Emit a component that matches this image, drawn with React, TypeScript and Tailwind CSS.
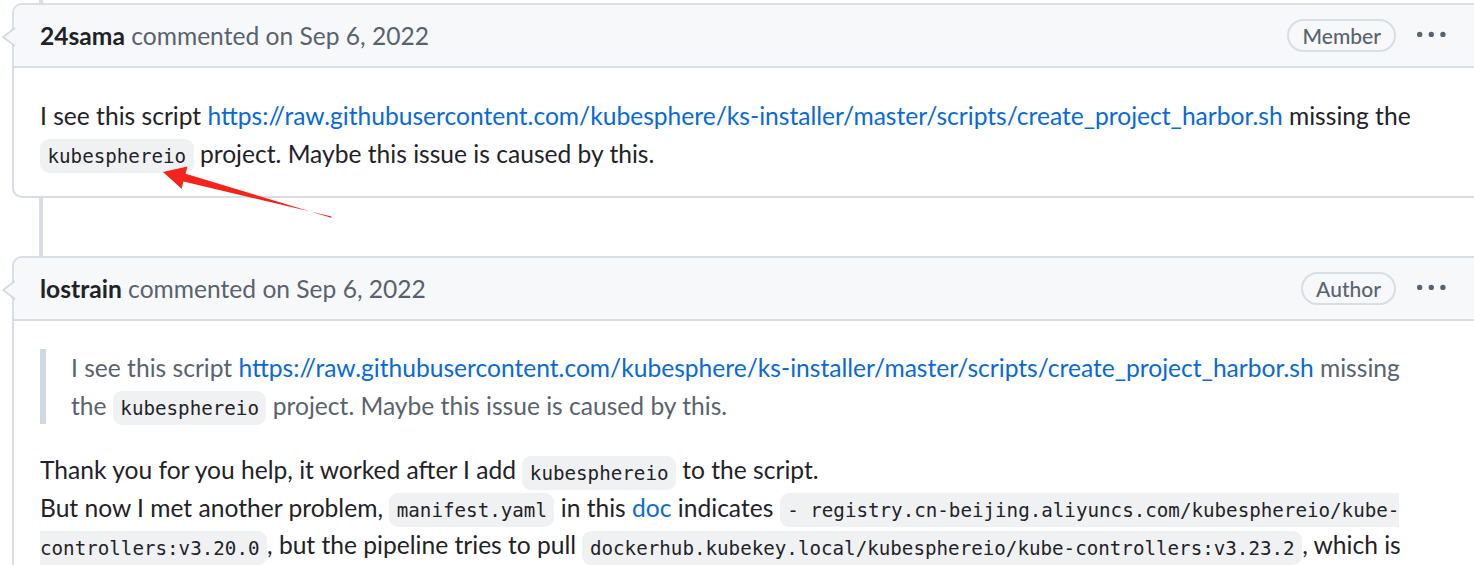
const code =
  "rounded-[9px] bg-[#eff1f3] px-[7.5px] py-[5.5px] font-['DejaVu_Sans_Mono',monospace] text-[19.2px] leading-none text-[#1f2328]";
const link = "text-[#0969da]";

function Caret() {
  return (
    <svg className="absolute left-[-12px] top-[21px]" width="14" height="22" viewBox="0 0 14 22">
      <polygon points="13,2 1,11 13,20" fill="#f6f8fa" />
      <polyline points="13,2 1,11 13,20" fill="none" stroke="#d1d9e0" strokeWidth="1.6" />
    </svg>
  );
}

function Kebab() {
  return (
    <svg width="28.6" height="28.6" viewBox="0 0 16 16" fill="#59636e">
      <path d="M8 9a1.5 1.5 0 1 0 0-3 1.5 1.5 0 0 0 0 3ZM1.5 9a1.5 1.5 0 1 0 0-3 1.5 1.5 0 0 0 0 3Zm13 0a1.5 1.5 0 1 0 0-3 1.5 1.5 0 0 0 0 3Z" />
    </svg>
  );
}

function Header({ author, role }: { author: string; role: string }) {
  return (
    <div className="flex h-[63px] items-center justify-between rounded-t-[9px] border-b-2 border-[#d8dee4] bg-[#f6f8fa] pl-[26px] pr-[44px]">
      <div className="text-[#59636e]">
        <span className="font-bold text-[#1f2328]">{author}</span> commented on Sep 6, 2022
      </div>
      <div className="flex items-center gap-[21px]">
        <span className="flex h-[33px] items-center rounded-full border-2 border-[#d8dee4] px-[13.5px] text-[21px] font-medium text-[#59636e]">
          {role}
        </span>
        <Kebab />
      </div>
    </div>
  );
}

function ScriptText() {
  return (
    <>
      I see this script{" "}
      <a className={link}>https://raw.githubusercontent.com/kubesphere/ks-installer/master/scripts/create_project_harbor.sh</a>{" "}
      missing the <code className={code}>kubesphereio</code> project. Maybe this issue is caused by this.
    </>
  );
}

export default function App() {
  return (
    <div className="relative h-[565px] w-[1474px] overflow-hidden bg-white font-['Lato',sans-serif] text-[24.6px] leading-[37.5px] text-[#1f2328]">
      {/* Timeline line */}
      <div className="absolute bottom-0 left-[39px] top-0 w-[4px] bg-[#d8dee4]" />

      <div className="relative flex flex-col pt-[3px]">
        {/* Comment 1 */}
        <div className="relative ml-[12px] w-[1480px] rounded-[10px] border-2 border-[#d8dee4] bg-white">
          <Caret />
          <Header author="24sama" role="Member" />
          <div className="pb-[24px] pl-[26px] pr-[65px] pt-[29px]">
            <p>
              <ScriptText />
            </p>
          </div>
        </div>

        <div className="h-[58px]" />

        {/* Comment 2 */}
        <div className="relative ml-[12px] w-[1480px] rounded-[10px] border-2 border-[#d8dee4] bg-white">
          <Caret />
          <Header author="lostrain" role="Author" />
          <div className="pb-[24px] pl-[26px] pr-[65px] pt-[28px]">
            <blockquote className="mb-[27px] border-l-[6px] border-[#d1d9e0] pl-[25px] text-[#59636e]">
              <ScriptText />
            </blockquote>
            <p>
              Thank you for you help, it worked after I add <code className={code}>kubesphereio</code> to the script.
              <br />
              But now I met another problem, <code className={code}>manifest.yaml</code> in this <a className={link}>doc</a>{" "}
              indicates <code className={code}>- registry.cn-beijing.aliyuncs.com/kubesphereio/kube-controllers:v3.20.0</code>, but
              the pipeline tries to pull <code className={code}>dockerhub.kubekey.local/kubesphereio/kube-controllers:v3.23.2</code>,
              which is not the version listed in the manifest, so the image cannot be found.
            </p>
          </div>
        </div>
      </div>

      {/* Red annotation arrow */}
      <svg className="pointer-events-none absolute left-0 top-0" width="1474" height="565">
        <polygon
          points="163,172 187.4,166.6 185.6,173.8 331.2,217.8 331.6,216.4 183.4,181.6 181.6,188.8"
          fill="#f4231c"
        />
      </svg>
    </div>
  );
}
